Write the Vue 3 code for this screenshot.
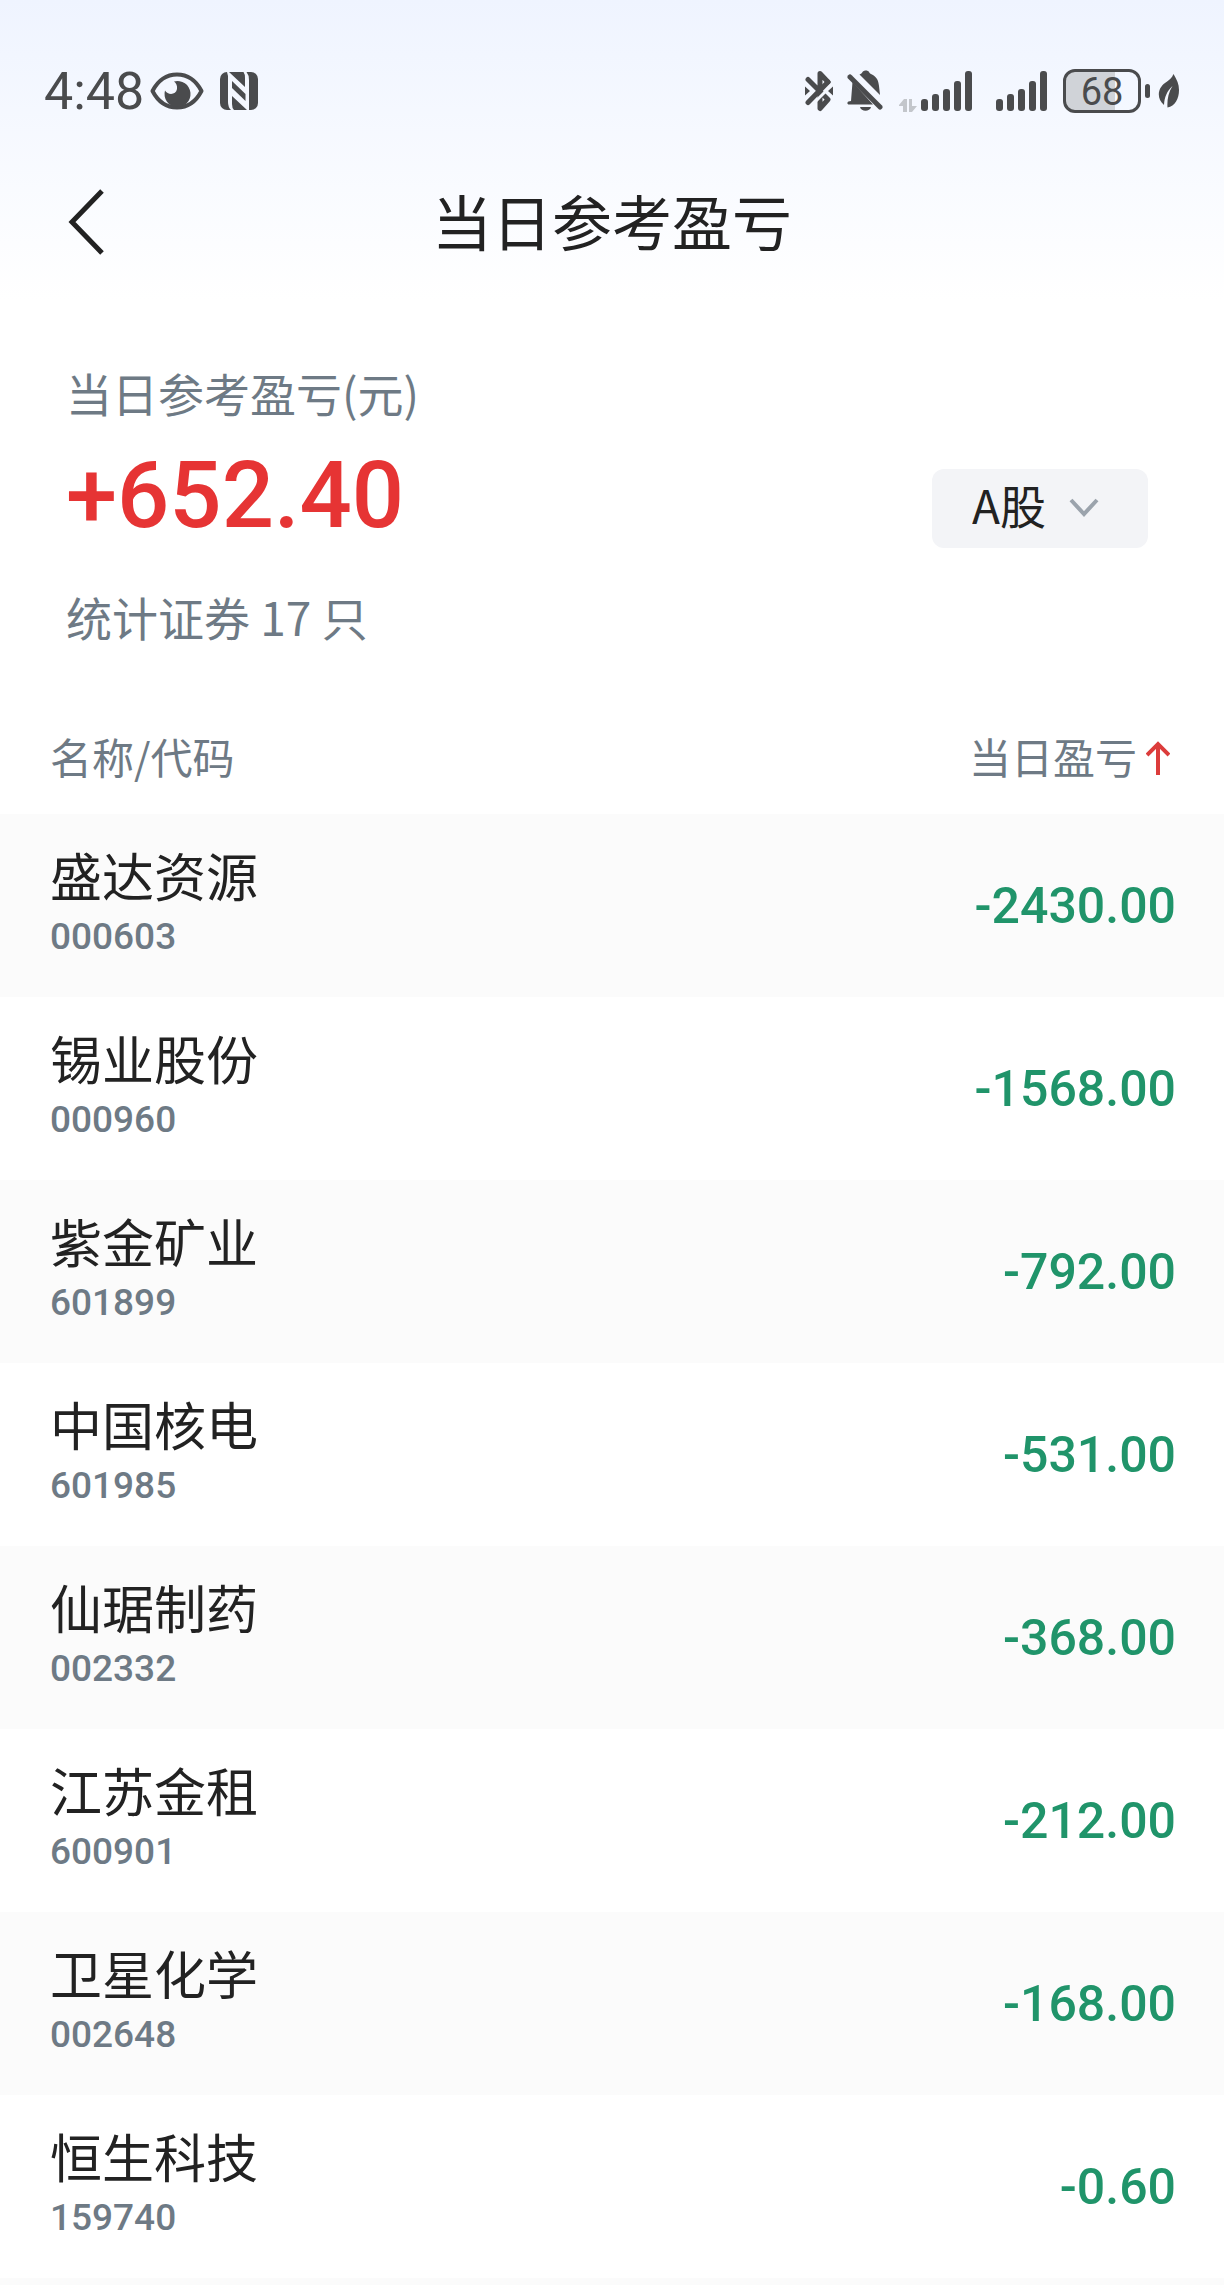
<script setup>
import { ref } from 'vue'

const market = ref('A股')
const bars = [12, 17, 22, 30, 40]
const rows = [
  { name: '盛达资源', code: '000603', profit: '-2430.00' },
  { name: '锡业股份', code: '000960', profit: '-1568.00' },
  { name: '紫金矿业', code: '601899', profit: '-792.00' },
  { name: '中国核电', code: '601985', profit: '-531.00' },
  { name: '仙琚制药', code: '002332', profit: '-368.00' },
  { name: '江苏金租', code: '600901', profit: '-212.00' },
  { name: '卫星化学', code: '002648', profit: '-168.00' },
  { name: '恒生科技', code: '159740', profit: '-0.60' },
]
</script>

<template>
  <div class="page">
    <div class="status">
      <div class="status-left">
        <span class="time">4:48</span>
        <svg class="eye" width="54" height="38" viewBox="0 0 54 38">
          <path d="M2.500 19C8 8.500 17 2.500 27 2.500S46 8.500 51.500 19C46 29.500 37 35.500 27 35.500S8 29.500 2.500 19Z" fill="none" stroke="#4a4b4d" stroke-width="4" stroke-linejoin="round" />
          <path d="M24 9.500A13 13 0 1 1 15 18.500C18 23.500 26 23 27 17C27.500 13.500 26 11 24 9.500Z" fill="#4a4b4d" />
        </svg>
        <svg width="38" height="38" viewBox="0 0 38 38">
          <rect width="38" height="38" rx="7" fill="#4a4b4d" />
          <path d="M7 0H9L25 15V6Q25 2 23.500 0H26.500Q29 3 29 8V38H27L12 24V32Q12 36 14 38H11Q8 35 8 30V4Z" fill="#f4f7fe" />
          <path d="M12 9L25.500 22V29L12 16Z" fill="#4a4b4d" />
        </svg>
      </div>
      <div class="status-right">
        <svg class="bluetooth" width="28" height="42" viewBox="0 0 28 42">
          <path d="M3 9.500L23 29.500L15 38.500V3.500L23 12" fill="none" stroke="#4a4b4d" stroke-width="5" stroke-linecap="round" stroke-linejoin="round" />
          <path d="M7 35L27 15" fill="none" stroke="#f4f7fe" stroke-width="3" />
          <path d="M3 32.500L23 12" fill="none" stroke="#4a4b4d" stroke-width="5" stroke-linecap="round" />
          <path d="M0 16.500L5 21L0 25.500ZM28 16.500L23 21L28 25.500Z" fill="#4a4b4d" />
        </svg>
        <svg class="bell" width="36" height="42" viewBox="0 0 36 42">
          <path d="M12.500 4.500C14 4 15 3 15.500 2C17 0 21 0 22 2C22.500 3 23.500 4 25 4.500C30 7 31.500 11 32 16L33 25Z" fill="#4a4b4d" />
          <path d="M5.500 12L26 34.500H2C0 34.500 0 32 1.500 31.500L4 31Z" fill="#4a4b4d" />
          <path d="M3 7L33 37" fill="none" stroke="#4a4b4d" stroke-width="5" stroke-linecap="round" />
          <path d="M13 37H24C23 42 14 42 13 37Z" fill="#4a4b4d" />
        </svg>
        <svg class="traffic" width="18" height="14" viewBox="0 0 18 14">
          <path d="M0 6L5 0H8V13H4V7H0ZM10 0H13V7H18L13 13H10Z" fill="#c3c6cb" />
        </svg>
        <svg v-for="n in 2" :key="n" class="signal" width="51" height="42" viewBox="0 0 51 42">
          <rect v-for="(h, i) in bars" :key="i" :x="i * 11" :y="41 - h" width="7" :height="h" rx="3" fill="#4a4b4d" />
        </svg>
        <div class="battery"><span>68</span></div>
        <i class="nub"></i>
        <svg class="leaf" width="22" height="36" viewBox="0 0 22 36">
          <path d="M15.500 1C19 7 21 11 21 17C21 26 17 33 9.500 34.500C9 28 10 20 14.500 13C9 18 6.500 24 6 32C-2 25 0 15 7 10C11 7 14 5 15.500 1Z" fill="#4a4b4d" />
        </svg>
      </div>
    </div>

    <header class="nav">
      <button class="back" type="button" aria-label="返回">
        <svg width="38" height="66" viewBox="0 0 38 66">
          <path d="M34 2L4 33L34 64" fill="none" stroke="#222" stroke-width="5" />
        </svg>
      </button>
      <h1>当日参考盈亏</h1>
    </header>

    <main>
      <section class="summary">
        <div>
          <p class="label">当日参考盈亏(元)</p>
          <p class="total">+652.40</p>
          <p class="label">统计证券 17 只</p>
        </div>
        <div class="market">
          <select v-model="market" aria-label="市场">
            <option>A股</option>
          </select>
          <svg width="30" height="20" viewBox="0 0 30 20">
            <path d="M2 2L15 16L28 2" fill="none" stroke="#9ba3ac" stroke-width="4" />
          </svg>
        </div>
      </section>

      <table>
        <thead>
          <tr>
            <th scope="col">名称/代码</th>
            <th scope="col" class="right" aria-sort="ascending">
              <button class="sort" type="button">
                当日盈亏
                <svg width="24" height="38" viewBox="0 0 24 38">
                  <path d="M12 38V7M1 18L12 7L23 18" fill="none" stroke="#dc3c3b" stroke-width="4" />
                </svg>
              </button>
            </th>
          </tr>
        </thead>
        <tbody>
          <tr v-for="row in rows" :key="row.code">
            <td>
              <div class="name">{{ row.name }}</div>
              <div class="code">{{ row.code }}</div>
            </td>
            <td class="right profit">{{ row.profit }}</td>
          </tr>
        </tbody>
      </table>
    </main>
    <div class="rest"></div>
  </div>
</template>

<style>
body {
  margin: 0;
}
</style>

<style scoped>
.page {
  display: flex;
  flex-direction: column;
  min-height: 100vh;
  background: #fff linear-gradient(#eff4ff, #fff) no-repeat 0 0 / 100% 300px;
  color: #222;
  font-family: "Noto Sans CJK SC", sans-serif;
}
.page * {
  box-sizing: border-box;
}
svg {
  display: block;
  flex: none;
}
h1,
p {
  margin: 0;
}
button,
select {
  border: 0;
  font: inherit;
  color: inherit;
}
.status {
  display: flex;
  justify-content: space-between;
  align-items: center;
  height: 70px;
  margin-top: 56px;
  padding: 0 44px;
  color: #4a4b4d;
  font-family: Roboto, sans-serif;
}
.status-left,
.status-right {
  display: flex;
  align-items: center;
}
.time {
  padding-top: 2px;
  font-size: 52px;
  line-height: 70px;
}
.eye {
  margin: 0 16px 0 6px;
}
.bell {
  margin: 0 16px 0 14px;
}
.traffic {
  align-self: flex-end;
  margin-right: 4px;
}
.signal {
  margin-right: 24px;
}
.signal + .battery {
  margin-left: -8px;
}
.battery {
  width: 78px;
  height: 44px;
  border: 3px solid #4a4b4d;
  border-radius: 12px;
  background: linear-gradient(90deg, #d0d3d8 68%, transparent 68%);
  font-size: 38px;
  line-height: 40px;
  text-align: center;
}
.nub {
  width: 5px;
  height: 14px;
  margin: 0 8px 0 4px;
  border-radius: 3px;
  background: #4a4b4d;
}
.nav {
  display: grid;
  grid-template-columns: 1fr auto 1fr;
  align-items: center;
  height: 192px;
  padding: 0 68px;
}
.back {
  justify-self: start;
  padding: 0;
  background: none;
}
h1 {
  padding-bottom: 4px;
  font-size: 60px;
  font-weight: 400;
  line-height: 80px;
}
.summary {
  display: flex;
  justify-content: space-between;
  align-items: center;
  padding: 44px 76px 55px 66px;
}
.label {
  color: #6e7a85;
  font-size: 46px;
  line-height: 60px;
}
.total {
  margin: 4px 0 20px;
  color: #e63434;
  font-family: Roboto, sans-serif;
  font-size: 92px;
  font-weight: 500;
  line-height: 140px;
}
.market {
  display: grid;
  align-items: center;
  margin-top: 8px;
}
.market > * {
  grid-area: 1 / 1;
}
.market svg {
  justify-self: end;
  margin-right: 49px;
  pointer-events: none;
}
select {
  appearance: none;
  width: 216px;
  height: 79px;
  padding: 0 40px 8px;
  border-radius: 12px;
  background: #f3f4f7;
  font-size: 46px;
}
table {
  width: 100%;
  border-collapse: collapse;
}
th,
td {
  padding: 0 48px 0 50px;
  text-align: left;
  vertical-align: middle;
}
th {
  height: 113px;
  padding-bottom: 4px;
  color: #6e7a85;
  font-size: 42px;
  font-weight: 400;
  line-height: 60px;
}
td {
  height: 183px;
}
.right {
  text-align: right;
}
.sort {
  display: inline-flex;
  align-items: center;
  gap: 9px;
  margin-right: 6px;
  padding: 0;
  background: none;
}
tbody tr:nth-child(odd),
.rest {
  background: #fbfbfb;
}
.name {
  font-size: 52px;
  line-height: 60px;
}
.code {
  padding-top: 2px;
  color: #6e7a85;
  font-family: Roboto, sans-serif;
  font-size: 37px;
  font-weight: 500;
  line-height: 60px;
}
.profit {
  color: #20946a;
  font-family: Roboto, sans-serif;
  font-size: 50px;
  font-weight: 500;
}
.rest {
  flex: 1;
  min-height: 7px;
}
</style>
